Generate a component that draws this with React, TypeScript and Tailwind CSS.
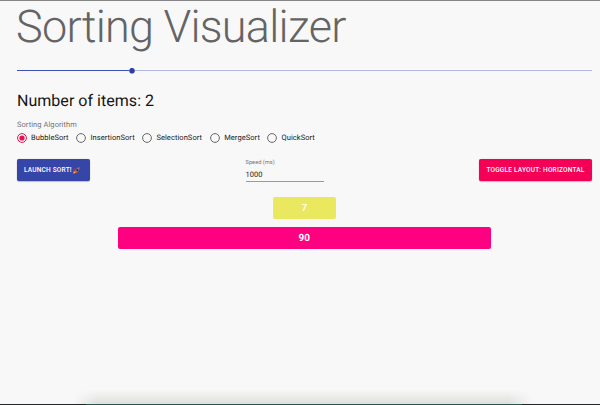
const algorithms = [
  { name: "BubbleSort", width: "w-[59.4px]" },
  { name: "InsertionSort", width: "w-[66px]" },
  { name: "SelectionSort", width: "w-[67.8px]" },
  { name: "MergeSort", width: "w-[57.3px]" },
  { name: "QuickSort", width: "w-[56px]" },
];

function Radio({ checked }: { checked: boolean }) {
  return (
    <svg className={checked ? "-mt-[0.8px] -ml-[0.4px] size-[10px] shrink-0 text-[#ea0f50]" : "-mt-[0.8px] -ml-[0.4px] size-[10px] shrink-0 text-[#686868]"} viewBox="2 2 20 20" fill="none" stroke="currentColor" strokeWidth="2">
      <circle cx="12" cy="12" r="8.8" />
      {checked && <circle cx="12" cy="12" r="5.2" fill="currentColor" stroke="none" />}
    </svg>
  );
}

function Rocket() {
  return (
    <svg className="ml-[1.5px] size-[7px]" viewBox="0 0 14 14">
      <path d="M0 7l3-4 4 1-3 4zM6 14l4-3-1-4-4 3z" fill="#c9303a" />
      <path d="M4 9c1-4 4-8 9-8 0 5-3 8-7 10z" fill="#7d8692" />
      <path d="M9 1l5-1-1 5z" fill="#d63a4c" />
      <circle cx="8.5" cy="6" r="2" fill="#20242c" />
      <path d="M0 13l2-5 4 4z" fill="#f9b04a" />
    </svg>
  );
}

export default function App() {
  return (
    <div className="flex h-[405px] w-[600px] flex-col overflow-hidden border-t border-[#858585] bg-[#f8f8f8] font-[Roboto,sans-serif] text-[#212121] [text-rendering:geometricPrecision]">
      <main className="flex flex-1 flex-col pr-2 pl-[17px]">
        <h1 className="mt-[-1px] -ml-px h-[53px] text-[45px] leading-[53px] font-light tracking-[-0.75px] whitespace-nowrap text-[#646464]">Sorting Visualizer</h1>
        <div className="mt-[14px] flex h-[7px] items-center">
          <div className="h-px w-[111.5px] bg-[#3f51b5]" />
          <svg className="size-[6px]" viewBox="0 0 6 6"><circle cx="3" cy="2.7" r="2.8" fill="#303f9f" /></svg>
          <div className="h-px flex-1 bg-[#b2b8e0]" />
        </div>
        <h4 className="mt-[17px] h-[20px] text-[16px] leading-[20px] tracking-[0.03px] text-[#151515]">Number of items: 2</h4>
        <div className="mt-[9px] h-[10px] text-[7.5px] leading-[10px] tracking-[0.07px] text-[#757575]">Sorting Algorithm</div>
        <div className="mt-[2px] flex h-[13px] items-center">
          {algorithms.map((a, i) => (
            <div key={a.name} className={`flex items-center gap-[4.4px] ${a.width}`}>
              <Radio checked={i === 0} />
              <span className="-mt-px text-[7.5px] leading-[12px] tracking-[0.07px]">{a.name}</span>
            </div>
          ))}
        </div>
        <div className="mt-[14px] flex h-[24px] items-start justify-between">
          <button className="mt-[0.3px] flex h-[22px] w-[73px] items-center rounded-[2px] bg-[#3545a8] pt-px pl-[7px] text-[6.56px] font-medium tracking-[0.19px] whitespace-nowrap text-white shadow-[0_0_1px_rgba(0,0,0,0.35),0_1px_1px_rgba(0,0,0,0.2)]">
            LAUNCH SORT!
            <Rocket />
          </button>
          <div className="h-[23px] w-[78px] border-b border-[#9a9aa0]">
            <div className="h-[9px] text-[5.63px] leading-[9px] tracking-[0.05px] text-[#757575]">Speed (ms)</div>
            <div className="h-[13px] text-[7.5px] leading-[13px] tracking-[0.04px]">1000</div>
          </div>
          <button className="mt-[0.3px] h-[22px] w-[113px] rounded-[2px] bg-[#f50057] pt-px text-[6.56px] font-medium tracking-[0.19px] whitespace-nowrap text-white shadow-[0_0_1px_rgba(0,0,0,0.35),0_1px_1px_rgba(0,0,0,0.2)]">TOGGLE LAYOUT: HORIZONTAL</button>
        </div>
        <div className="mt-[14px] flex flex-col items-center gap-[8px] pr-[0.4px] text-[10px] leading-[24px] font-medium text-white">
          <div className="h-[22px] w-[63.2px] rounded-[2px] bg-[#eae85f] text-center">7</div>
          <div className="h-[22px] w-[373.2px] rounded-[2px] bg-[#ff0080] text-center font-bold">90</div>
        </div>
      </main>
      <footer className="h-[15px]">
        <div className="ml-[74px] h-[14px] w-[458px] bg-linear-to-b from-transparent to-[#dededc] mask-x-from-95%" />
        <div className="flex h-px bg-[#222626]">
          <div className="ml-[86px] w-[436px] bg-[#28584d]" />
        </div>
      </footer>
    </div>
  );
}
